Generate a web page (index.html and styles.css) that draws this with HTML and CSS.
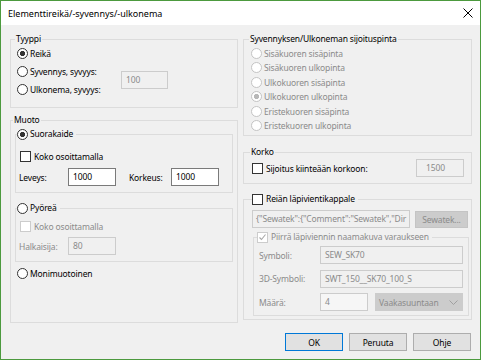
FILE: index.html
```html
<!DOCTYPE html>
<html lang="fi">

<head>
  <meta charset="UTF-8">
  <link rel="stylesheet" href="styles.css">
  <title>Elementtireikä/-syvennys/-ulkonema</title>
</head>

<body>
  <div class="window">
    <div class="titlebar">
      <span class="title">Elementtireikä/-syvennys/-ulkonema</span>
      <svg class="close" width="10" height="10" viewBox="0 0 10 10">
        <path d="M0.5 0.5L9.5 9.5M9.5 0.5L0.5 9.5" stroke="#000" stroke-width="1" fill="none" />
      </svg>
    </div>

    <div class="cols">
      <!-- vasen sarake -->
      <div class="col">
        <fieldset class="group tyyppi">
          <legend>Tyyppi</legend>
          <div class="tyyppi-grid">
            <div class="opt"><span class="radio on"></span>Reikä</div>
            <div class="opt"><span class="radio"></span>Syvennys, syvyys:</div>
            <div class="opt"><span class="radio"></span>Ulkonema, syvyys:</div>
            <div class="field off depth">100</div>
          </div>
        </fieldset>

        <fieldset class="group muoto">
          <legend>Muoto</legend>

          <fieldset class="group sub rect">
            <legend><div class="opt"><span class="radio on"></span>Suorakaide</div></legend>
            <div class="opt ind"><span class="check"></span>Koko osoittamalla</div>
            <div class="size-row">
              <span>Leveys:</span>
              <div class="field">1000</div>
              <span></span>
              <span>Korkeus:</span>
              <div class="field">1000</div>
            </div>
          </fieldset>

          <fieldset class="group sub round">
            <legend><div class="opt"><span class="radio"></span>Pyöreä</div></legend>
            <div class="opt ind off"><span class="check off"></span>Koko osoittamalla</div>
            <div class="size-row off">
              <span>Halkaisija:</span>
              <div class="field off">80</div>
            </div>
          </fieldset>

          <div class="opt multi"><span class="radio"></span>Monimuotoinen</div>
        </fieldset>
      </div>

      <!-- oikea sarake -->
      <div class="col">
        <fieldset class="group pinta">
          <legend>Syvennyksen/Ulkoneman sijoituspinta</legend>
          <div class="opt off"><span class="radio off"></span>Sisäkuoren sisäpinta</div>
          <div class="opt off"><span class="radio off"></span>Sisäkuoren ulkopinta</div>
          <div class="opt off"><span class="radio off"></span>Ulkokuoren sisäpinta</div>
          <div class="opt off"><span class="radio off on"></span>Ulkokuoren ulkopinta</div>
          <div class="opt off"><span class="radio off"></span>Eristekuoren sisäpinta</div>
          <div class="opt off"><span class="radio off"></span>Eristekuoren ulkopinta</div>
        </fieldset>

        <fieldset class="group korko">
          <legend>Korko</legend>
          <div class="korko-row">
            <div class="opt"><span class="check"></span>Sijoitus kiinteään korkoon:</div>
            <div class="field off wide-pad">1500</div>
          </div>
        </fieldset>

        <fieldset class="group lapivienti">
          <legend><div class="opt"><span class="check"></span>Reiän läpivientikappale</div></legend>
          <div class="json-row">
            <div class="field off json">{"Sewatek":{"Comment":"Sewatek","Dir</div>
            <div class="btn off">Sewatek...</div>
          </div>

          <fieldset class="group sub naama">
            <legend>
              <div class="opt off">
                <span class="check off">
                  <svg width="9" height="9" viewBox="0 0 9 9">
                    <path d="M1.5 4.5L3.5 6.5L7.5 1.5" stroke="#a8a8a8" stroke-width="1.1" fill="none" />
                  </svg>
                </span>Piirrä läpiviennin naamakuva varaukseen
              </div>
            </legend>
            <div class="symbol-grid off">
              <span>Symboli:</span>
              <div class="field off span">SEW_SK70</div>
              <span>3D-Symboli:</span>
              <div class="field off span">SWT_150__SK70_100_S</div>
              <span>Määrä:</span>
              <div class="field off light">4</div>
              <div class="select">
                <span>Vaakasuuntaan</span>
                <svg width="9" height="5" viewBox="0 0 9 5">
                  <path d="M0.5 0.5L4.5 4.5L8.5 0.5" stroke="#a0a0a0" stroke-width="1" fill="none" />
                </svg>
              </div>
            </div>
          </fieldset>
        </fieldset>
      </div>
    </div>

    <div class="buttons">
      <div class="btn default">OK</div>
      <div class="btn">Peruuta</div>
      <div class="btn">Ohje</div>
    </div>
  </div>
</body>

</html>
```

FILE: styles.css
```css
body {
  margin: 0;
  font-family: 'Noto Sans', sans-serif;
  font-size: 8.5px;
  letter-spacing: -0.15px;
  color: #000;
}

.window {
  width: 481px;
  height: 360px;
  box-sizing: border-box;
  border: 1px solid #4c9a3e;
  background-color: #f0f0f0;
}

.titlebar {
  height: 24px;
  background-color: #fff;
  display: flex;
  align-items: center;
  justify-content: space-between;
  padding: 0 7px 0 7px;
}

.title {
  font-size: 9px;
  letter-spacing: 0;
}

.cols {
  display: grid;
  grid-template-columns: 228px 229px;
  column-gap: 5px;
  padding: 9px 0 0 9px;
}

.group {
  margin: 0;
  min-width: 0;
  border: 1px solid #dcdcdc;
}

.group legend {
  line-height: 10px;
  padding: 0 1px;
  margin-left: -2px;
}

.group.sub legend {
  line-height: 12px;
  padding: 0 3px 0 0;
}

.opt {
  display: flex;
  align-items: center;
  gap: 2px;
  height: 18px;
  white-space: nowrap;
}

legend .opt {
  height: 12px;
}

.off {
  color: #8b8b8b;
}

.radio {
  flex: none;
  width: 11px;
  height: 11px;
  box-sizing: border-box;
  border: 1px solid #333;
  border-radius: 50%;
  background-color: #fff;
}

.radio.on {
  background: radial-gradient(circle, #333 0 2.4px, #fff 2.9px);
}

.radio.off {
  border-color: #c4c4c4;
}

.radio.off.on {
  background: radial-gradient(circle, #b8b8b8 0 2.4px, #fff 2.9px);
}

.check {
  flex: none;
  width: 11px;
  height: 11px;
  box-sizing: border-box;
  border: 1px solid #333;
  background-color: #fff;
  margin-right: 1px;
  display: flex;
  align-items: center;
  justify-content: center;
}

.check.off {
  border-color: #cccccc;
}

.field {
  height: 18px;
  box-sizing: border-box;
  border: 1px solid #7a7a7a;
  background-color: #fff;
  padding: 0 4px;
  line-height: 15px;
  white-space: nowrap;
  overflow: hidden;
}

.field.off {
  border-color: #cccccc;
  background-color: #f0f0f0;
}

.field.light {
  background-color: #f6f6f6;
}

/* Tyyppi */
.tyyppi {
  padding: 0 0 9px 6px;
}

.tyyppi-grid {
  display: grid;
  grid-template-columns: 104px 47px;
  grid-template-rows: repeat(3, 18px);
}

.tyyppi-grid .opt {
  grid-column: 1;
}

.depth {
  grid-column: 2;
  grid-row: 2 / 4;
  align-self: center;
}

/* Muoto */
.muoto {
  margin-top: 7px;
  padding: 3px 4px 40px 4px;
}

.rect {
  padding: 7px 3px 6px 3px;
}

.round {
  margin-top: 9px;
  padding: 3px 3px 6px 3px;
}

.ind {
  margin-left: 1px;
}

.size-row {
  display: grid;
  grid-template-columns: 49px 48px 13px 42px 48px;
  align-items: center;
  margin-top: 3px;
  height: 18px;
}

.round .size-row {
  margin-top: 2px;
}

.multi {
  margin: 2px 0 0 2px;
}

/* oikea puoli */
.pinta {
  padding: 2px 0 2px 7px;
}

.pinta .opt {
  height: 14.5px;
}

.korko {
  margin-top: 11px;
  padding: 2px 7px 6px 8px;
}

.korko-row {
  display: flex;
  align-items: center;
  justify-content: space-between;
}

.korko-row .field {
  width: 48px;
}

.wide-pad {
  padding-left: 9px;
}

.lapivienti {
  margin-top: 9px;
  padding: 5px 2px 3px 8px;
}

.lapivienti > legend {
  margin-left: 0;
  padding: 0 3px 0 0;
  line-height: 12px;
}

.json-row {
  display: flex;
  gap: 5px;
}

.json {
  width: 158px;
  padding-left: 3px;
}

.naama {
  margin: 3px 0 0 1px;
  padding: 3px 4px 4px 5px;
}

.symbol-grid {
  display: grid;
  grid-template-columns: 61px 48px 7px 88px;
  grid-template-rows: repeat(3, 18px);
  row-gap: 5.5px;
  align-items: center;
}

.symbol-grid .span {
  grid-column: 2 / 5;
}

.symbol-grid .select {
  grid-column: 4;
}

.select {
  height: 18px;
  box-sizing: border-box;
  background-color: #cccccc;
  border: 1px solid #cccccc;
  display: flex;
  align-items: center;
  justify-content: space-between;
  padding: 0 4px 0 3px;
  color: #8b8b8b;
}

.btn {
  width: 58px;
  height: 18px;
  box-sizing: border-box;
  border: 1px solid #adadad;
  background-color: #e1e1e1;
  display: flex;
  align-items: center;
  justify-content: center;
}

.btn.off {
  width: 53px;
  height: 17px;
  margin-top: 1px;
  background-color: #cccccc;
  border-color: #c4c4c4;
}

.btn.default {
  border-color: #0078d7;
}

.buttons {
  display: flex;
  justify-content: flex-end;
  gap: 6px;
  margin-top: 10px;
  padding-right: 9px;
}
```
